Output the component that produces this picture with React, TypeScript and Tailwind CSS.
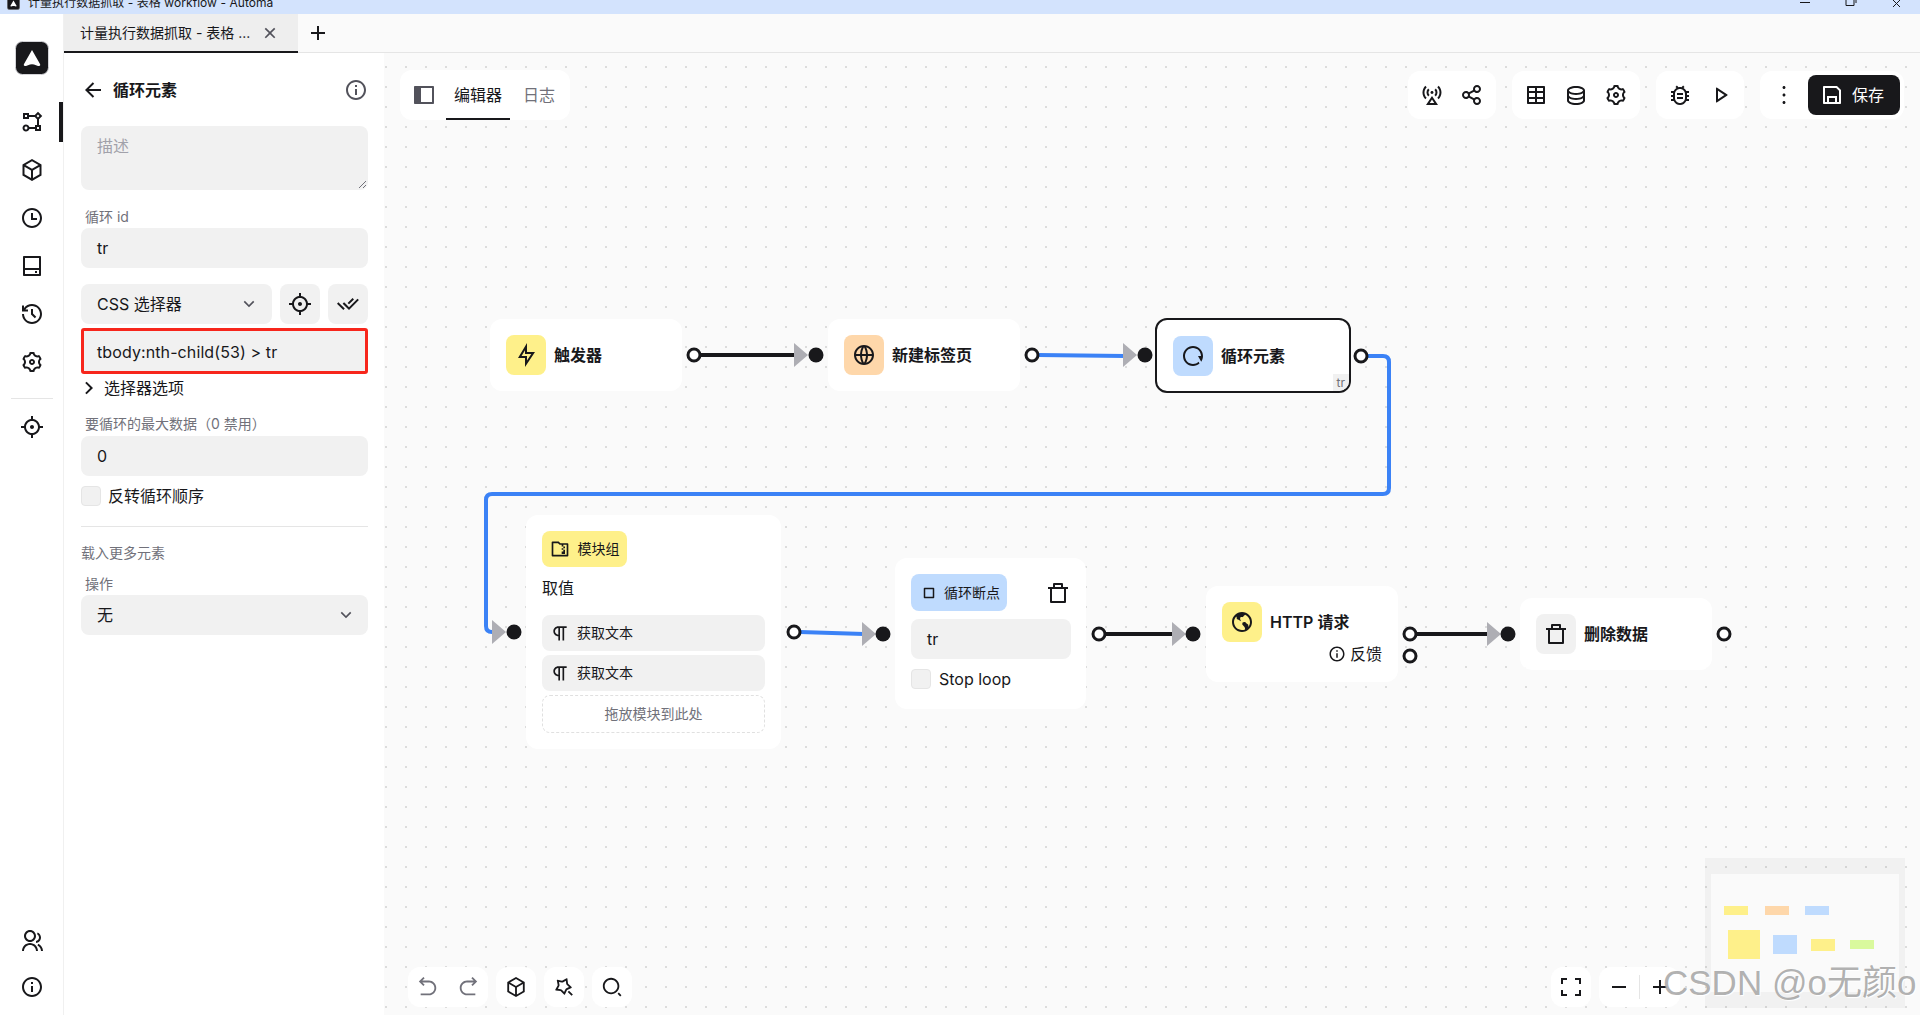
import type { ReactNode } from "react";
import {
  RiAddLine,
  RiArrowDownSLine,
  RiArrowGoBackLine,
  RiArrowGoForwardLine,
  RiArrowLeftLine,
  RiArrowRightSLine,
  RiBaseStationLine,
  RiBox3Line,
  RiBug2Line,
  RiCheckDoubleLine,
  RiCloseLine,
  RiDatabase2Line,
  RiEarthLine,
  RiFlashlightLine,
  RiFlowChart,
  RiFocus3Line,
  RiFolderZipLine,
  RiFullscreenLine,
  RiGlobalLine,
  RiGroupLine,
  RiHardDrive2Line,
  RiHistoryLine,
  RiInformationLine,
  RiMagicLine,
  RiMore2Line,
  RiParagraph,
  RiPlayLine,
  RiRestartLine,
  RiSaveLine,
  RiSearch2Line,
  RiSettings3Line,
  RiShareLine,
  RiSideBarFill,
  RiStopLine,
  RiSubtractLine,
  RiTable2,
  RiTimeLine,
} from "react-icons/ri";

const Logo = ({ size }: { size: number }) => (
  <svg width={size} height={size} viewBox="0 0 34 34">
    <rect x="0.5" y="0.5" width="33" height="33" rx="7" fill="#18181b" stroke="#d4d4d8" />
    <path d="M17 9 L25 23 Q26 25 23 25 L19 23.5 Q17 23 15 23.5 L11 25 Q8 25 9 23 Z" fill="#fff" />
  </svg>
);

const TrashIcon = () => (
  <svg width="24" height="24" viewBox="0 0 24 24" fill="currentColor">
    <path d="M17 6h5v2h-2v13a1 1 0 0 1-1 1H5a1 1 0 0 1-1-1V8H2V6h5V3a1 1 0 0 1 1-1h8a1 1 0 0 1 1 1v3zm1 2H6v12h12V8zM9 4v2h6V4H9z" />
  </svg>
);

const NavItem = ({ children }: { children: ReactNode }) => (
  <div className="flex h-10 w-full shrink-0 items-center justify-center text-[#18181b]">
    {children}
  </div>
);

const Nav = () => (
  <aside className="relative flex w-16 shrink-0 flex-col items-center border-r border-[#f0f0f0] bg-white">
    <div className="mt-[27px] mb-[27px]">
      <Logo size={34} />
    </div>
    <div className="flex w-full flex-col gap-2">
      <NavItem><RiFlowChart size={24} /></NavItem>
      <NavItem><RiBox3Line size={24} /></NavItem>
      <NavItem><RiTimeLine size={24} /></NavItem>
      <NavItem><RiHardDrive2Line size={24} /></NavItem>
      <NavItem><RiHistoryLine size={24} /></NavItem>
      <NavItem><RiSettings3Line size={24} /></NavItem>
    </div>
    <div className="mt-4 mb-2 h-px w-[42px] bg-[#e5e5e5]" />
    <NavItem><RiFocus3Line size={24} /></NavItem>
    <div className="mt-auto mb-2 flex w-full flex-col gap-1.5">
      <NavItem><RiGroupLine size={24} /></NavItem>
      <NavItem><RiInformationLine size={24} /></NavItem>
    </div>
    <div className="absolute top-[88px] right-0 h-10 w-1 bg-[#18181b]" />
  </aside>
);

const Label = ({ children }: { children: ReactNode }) => (
  <div className="h-5 pl-1 text-sm leading-5 text-[#71717a]">{children}</div>
);

const Field = ({ children, className = "" }: { children: ReactNode; className?: string }) => (
  <div className={`flex h-10 items-center rounded-lg bg-[#f1f1f1] px-4 text-base text-[#18181b] ${className}`}>
    {children}
  </div>
);

const Panel = () => (
  <section className="w-[320px] shrink-0 bg-white pt-[25px] pr-4 pl-[17px]">
    <div className="flex h-6 items-center text-[#18181b]">
      <RiArrowLeftLine size={24} />
      <span className="ml-2 text-base font-semibold">循环元素</span>
      <RiInformationLine size={24} className="ml-auto text-[#52525b]" />
    </div>

    <div className="relative mt-6 h-16 rounded-lg bg-[#f1f1f1] px-4 py-2 text-base leading-6 text-[#a1a1aa]">
      描述
      <svg width="9" height="9" viewBox="0 0 9 9" className="absolute right-[1px] bottom-[1px]">
        <path d="M1 8 L8 1 M5 8 L8 5" stroke="#71717a" strokeWidth="1" />
      </svg>
    </div>

    <div className="mt-[17px] mb-px"><Label>循环 id</Label></div>
    <Field>tr</Field>

    <div className="mt-4 flex gap-2">
      <Field className="w-[191px] justify-between">
        <span>CSS 选择器</span>
        <RiArrowDownSLine size={20} className="mr-[-3px] text-[#52525b]" />
      </Field>
      <div className="flex h-10 w-10 items-center justify-center rounded-lg bg-[#f1f1f1]"><RiFocus3Line size={24} /></div>
      <div className="flex h-10 w-10 items-center justify-center rounded-lg bg-[#f1f1f1]"><RiCheckDoubleLine size={24} /></div>
    </div>

    <div className="mt-1 flex h-[46px] items-center rounded-[3px] border-[3px] border-[#f7261c] bg-[#f1f1f1] px-[13px] pt-px text-base tracking-[0.1px] text-[#18181b]">
      tbody:nth-child(53) &gt; tr
    </div>

    <div className="mt-1 flex h-5 items-center text-base text-[#18181b]">
      <RiArrowRightSLine size={24} className="ml-[-4px]" />
      <span className="ml-[3px]">选择器选项</span>
    </div>

    <div className="mt-4 mb-[2px]"><Label>要循环的最大数据（0 禁用）</Label></div>
    <Field>0</Field>

    <div className="mt-2.5 flex h-5 items-center">
      <span className="h-5 w-5 rounded border border-[#e5e5e5] bg-[#f1f1f1]" />
      <span className="ml-[7px] text-base text-[#18181b]">反转循环顺序</span>
    </div>

    <div className="mt-5 h-px bg-[#e5e5e5]" />

    <div className="mt-4 h-5 text-sm leading-5 text-[#71717a]">载入更多元素</div>
    <div className="mt-[11px] mb-px"><Label>操作</Label></div>
    <Field className="justify-between">
      <span>无</span>
      <RiArrowDownSLine size={20} className="mr-[-4px] text-[#52525b]" />
    </Field>
  </section>
);

const Card = ({ className, children }: { className: string; children: ReactNode }) => (
  <div className={`flex items-center rounded-xl bg-white ${className}`}>{children}</div>
);

const ToolIcon = ({ children }: { children: ReactNode }) => (
  <div className="flex w-10 items-center justify-center text-[#18181b]">{children}</div>
);

const TopBar = () => (
  <>
    <Card className="absolute top-[17px] left-4 h-[50px] w-[170px] pl-3">
      <RiSideBarFill size={24} className="text-[#52525b]" />
      <div className="relative ml-2.5 flex h-full w-16 items-center justify-center text-base text-[#18181b]">
        编辑器
        <span className="absolute right-0 bottom-0 left-0 h-[2px] bg-[#18181b]" />
      </div>
      <span className="ml-[13px] text-base text-[#71717a]">日志</span>
    </Card>
    <div className="absolute top-[18px] right-4 flex h-12 gap-4">
      <Card className="px-1">
        <ToolIcon><RiBaseStationLine size={24} /></ToolIcon>
        <ToolIcon><RiShareLine size={24} /></ToolIcon>
      </Card>
      <Card className="px-1">
        <ToolIcon><RiTable2 size={24} /></ToolIcon>
        <ToolIcon><RiDatabase2Line size={24} /></ToolIcon>
        <ToolIcon><RiSettings3Line size={24} /></ToolIcon>
      </Card>
      <Card className="px-1">
        <ToolIcon><RiBug2Line size={24} /></ToolIcon>
        <ToolIcon><RiPlayLine size={24} /></ToolIcon>
      </Card>
      <Card className="w-[144px] pl-1">
        <ToolIcon><RiMore2Line size={24} /></ToolIcon>
        <button className="ml-1 flex h-10 w-[92px] items-center gap-2 rounded-lg bg-[#18181b] pl-3 text-base text-white">
          <RiSaveLine size={24} />
          保存
        </button>
      </Card>
    </div>
  </>
);

const BottomBar = () => (
  <>
    <div className="absolute bottom-2 left-6 flex h-10 gap-2">
      <Card className="w-20">
        <ToolIcon><RiArrowGoBackLine size={22} className="text-[#71717a]" /></ToolIcon>
        <ToolIcon><RiArrowGoForwardLine size={22} className="text-[#71717a]" /></ToolIcon>
      </Card>
      <Card className="w-10"><ToolIcon><RiBox3Line size={22} /></ToolIcon></Card>
      <Card className="w-10"><ToolIcon><RiMagicLine size={22} /></ToolIcon></Card>
      <Card className="w-10"><ToolIcon><RiSearch2Line size={22} /></ToolIcon></Card>
    </div>
    <div className="absolute bottom-2 left-[1167px] flex h-10 gap-2">
      <Card className="w-10"><ToolIcon><RiFullscreenLine size={24} /></ToolIcon></Card>
      <Card className="w-[81px]">
        <ToolIcon><RiSubtractLine size={24} /></ToolIcon>
        <span className="h-6 w-px bg-[#e5e5e5]" />
        <ToolIcon><RiAddLine size={24} /></ToolIcon>
      </Card>
    </div>
  </>
);

const Edges = () => (
  <svg
    className="absolute inset-0 h-full w-full"
    viewBox="384 53 1536 962"
    fill="none"
  >
    <path d="M700 355 H796" stroke="#18181b" strokeWidth="4" />
    <path d="M1038 355 L1125 356" stroke="#3b82f6" strokeWidth="4" />
    <path
      d="M1368 356 H1383 Q1389 356 1389 362 V488 Q1389 494 1383 494 H492 Q486 494 486 500 V626 Q486 632 492 632 H496"
      stroke="#3b82f6"
      strokeWidth="4"
    />
    <path d="M800 632 L864 634" stroke="#3b82f6" strokeWidth="4" />
    <path d="M1106 634 H1174" stroke="#18181b" strokeWidth="4" />
    <path d="M1417 634 H1489" stroke="#18181b" strokeWidth="4" />

    <path d="M794 343 L808 355 L794 367 Z" fill="#aeaeb4" />
    <path d="M1123 343 L1137 355 L1123 367 Z" fill="#aeaeb4" />
    <path d="M492 620 L506 632 L492 644 Z" fill="#aeaeb4" />
    <path d="M862 622 L876 634 L862 646 Z" fill="#aeaeb4" />
    <path d="M1172 622 L1186 634 L1172 646 Z" fill="#aeaeb4" />
    <path d="M1487 622 L1501 634 L1487 646 Z" fill="#aeaeb4" />

    <g fill="#18181b">
      <circle cx="816" cy="355" r="7.5" />
      <circle cx="1145" cy="355" r="7.5" />
      <circle cx="514" cy="632" r="7.5" />
      <circle cx="883" cy="634" r="7.5" />
      <circle cx="1193" cy="634" r="7.5" />
      <circle cx="1508" cy="634" r="7.5" />
    </g>
    <g fill="#fff" stroke="#18181b" strokeWidth="3">
      <circle cx="694" cy="355" r="6" />
      <circle cx="1032" cy="355" r="6" />
      <circle cx="1361" cy="356" r="6" />
      <circle cx="794" cy="632" r="6" />
      <circle cx="1099" cy="634" r="6" />
      <circle cx="1410" cy="634" r="6" />
      <circle cx="1410" cy="656" r="6" />
      <circle cx="1724" cy="634" r="6" />
    </g>
  </svg>
);

const IconBox = ({ className, children }: { className: string; children: ReactNode }) => (
  <span className={`flex h-10 w-10 shrink-0 items-center justify-center rounded-lg text-[#18181b] ${className}`}>
    {children}
  </span>
);

const Nodes = () => (
  <>
    <div className="absolute top-[266px] left-[106px] flex h-[72px] w-[192px] items-center gap-2 rounded-xl bg-white px-4">
      <IconBox className="bg-[#fef08a]"><RiFlashlightLine size={24} /></IconBox>
      <span className="text-base font-semibold">触发器</span>
    </div>

    <div className="absolute top-[266px] left-[444px] flex h-[72px] w-[192px] items-center gap-2 rounded-xl bg-white px-4">
      <IconBox className="bg-[#fed7aa]"><RiGlobalLine size={24} /></IconBox>
      <span className="text-base font-semibold">新建标签页</span>
    </div>

    <div className="absolute top-[265px] left-[771px] flex h-[75px] w-[196px] items-center gap-2 overflow-hidden rounded-xl border-2 border-[#18181b] bg-white px-4">
      <IconBox className="bg-[#bfdbfe]"><RiRestartLine size={24} /></IconBox>
      <span className="text-base font-semibold">循环元素</span>
      <span className="absolute right-0 bottom-0 bg-[#f1f1f1] px-1 text-xs leading-[17px] text-[#71717a]">tr</span>
    </div>

    <div className="absolute top-[462px] left-[142px] h-[234px] w-[255px] rounded-xl bg-white p-4">
      <div className="flex h-9 w-[85px] items-center justify-center gap-2 rounded-lg bg-[#fef08a] text-sm text-[#18181b]">
        <RiFolderZipLine size={20} />
        模块组
      </div>
      <div className="mt-[11px] text-base leading-5 text-[#18181b]">取值</div>
      <div className="mt-[17px] flex flex-col gap-1">
        {[0, 1].map((i) => (
          <div key={i} className="flex h-9 items-center gap-[7px] rounded-lg bg-[#f1f1f1] pl-2 text-sm text-[#18181b]">
            <RiParagraph size={20} />
            获取文本
          </div>
        ))}
        <div className="flex h-[38px] items-center justify-center rounded-lg border border-dashed border-[#e0e0e0] text-sm text-[#71717a]">
          拖放模块到此处
        </div>
      </div>
    </div>

    <div className="absolute top-[505px] left-[511px] h-[151px] w-[191px] rounded-xl bg-white p-4">
      <div className="flex items-center justify-between">
        <div className="flex h-[37px] w-[96px] items-center gap-1.5 rounded-lg bg-[#bfdbfe] pl-[9px] text-sm whitespace-nowrap text-[#18181b]">
          <RiStopLine size={18} />
          循环断点
        </div>
        <TrashIcon />
      </div>
      <Field className="mt-2 w-40">tr</Field>
      <div className="mt-2.5 flex h-5 items-center">
        <span className="h-5 w-5 rounded border border-[#e5e5e5] bg-[#f1f1f1]" />
        <span className="ml-2 text-base text-[#18181b]">Stop loop</span>
      </div>
    </div>

    <div className="absolute top-[533px] left-[822px] h-[96px] w-[192px] rounded-xl bg-white p-4">
      <div className="flex items-center gap-2">
        <IconBox className="bg-[#fef08a]"><RiEarthLine size={24} /></IconBox>
        <span className="text-base font-semibold">HTTP 请求</span>
      </div>
      <div className="flex items-center justify-end gap-1 text-base text-[#18181b]">
        <RiInformationLine size={18} />
        反馈
      </div>
    </div>

    <div className="absolute top-[545px] left-[1136px] flex h-[72px] w-[192px] items-center gap-2 rounded-xl bg-white px-4">
      <IconBox className="bg-[#f1f1f1]"><TrashIcon /></IconBox>
      <span className="text-base font-semibold">删除数据</span>
    </div>
  </>
);

const minimapRects = [
  { x: 19, y: 48, w: 24, h: 9, color: "#fef08a" },
  { x: 60, y: 48, w: 24, h: 9, color: "#fed7aa" },
  { x: 100, y: 48, w: 24, h: 9, color: "#bfdbfe" },
  { x: 23, y: 72, w: 32, h: 29, color: "#fef08a" },
  { x: 68, y: 77, w: 24, h: 19, color: "#bfdbfe" },
  { x: 106, y: 81, w: 24, h: 12, color: "#fef08a" },
  { x: 145, y: 82, w: 24, h: 9, color: "#d9f99d" },
];

const Minimap = () => (
  <svg
    width="200"
    height="150"
    viewBox="0 0 200 150"
    className="absolute top-[805px] left-[1321px]"
  >
    <rect width="200" height="150" fill="#000" fillOpacity="0.035" />
    <rect x="6" y="16" width="188" height="118" fill="#fafafa" />
    {minimapRects.map((r) => (
      <rect key={r.x} x={r.x} y={r.y} width={r.w} height={r.h} fill={r.color} />
    ))}
  </svg>
);

export default function App() {
  return (
    <div className="flex h-[1015px] w-[1920px] flex-col overflow-hidden bg-white font-['Inter','Noto_Sans_CJK_SC',sans-serif] text-[#18181b]">
      {/* window title, cut off at the top of the shot */}
      <div className="relative flex h-3.5 shrink-0 items-start overflow-hidden bg-[#d3e3fd]">
        <div className="mt-[-7px] ml-[7px] flex h-5 items-center gap-2 text-xs tracking-[0.05px] whitespace-nowrap">
          <Logo size={13} />
          计量执行数据抓取 - 表格 workflow - Automa
        </div>
        <svg width="110" height="14" viewBox="0 0 110 14" className="absolute top-0 right-2.5" fill="none" stroke="#18181b">
          <path d="M0 2.5 H10" />
          <path d="M46 0 V5.5 H54 V0 M56 0 V3" />
          <path d="M93 0 L100 7 M100 0 L93 7" />
        </svg>
      </div>

      <div className="flex min-h-0 flex-1">
        <Nav />
        <div className="flex min-w-0 flex-1 flex-col">
          <div className="flex h-[39px] shrink-0 border-b border-[#e5e5e5] bg-[#fafafa]">
            <div className="flex h-[39px] w-[234px] items-center border-b-2 border-[#18181b] bg-[#eeeeee] pr-5 pl-4 text-sm whitespace-nowrap">
              <span>计量执行数据抓取 - 表格 ...</span>
              <RiCloseLine size={20} className="mr-[-2px] ml-auto text-[#52525b]" />
            </div>
            <div className="ml-2 flex w-6 items-center justify-center">
              <RiAddLine size={24} />
            </div>
          </div>

          <div className="flex min-h-0 flex-1">
            <Panel />
            <main className="relative flex-1 overflow-hidden bg-[#fafafa] bg-[radial-gradient(circle_at_1px_1px,#dcdcdc_1px,transparent_1.2px)] bg-[size:20px_20px] bg-[position:1px_13px]">
              <Minimap />
              <Edges />
              <Nodes />
              <TopBar />
              <BottomBar />
              <span className="absolute top-[907px] left-[1279px] font-['Liberation_Sans','Noto_Sans_CJK_SC',sans-serif] text-[35px] leading-[46px] whitespace-nowrap text-[#8f8f8f]/70 [text-shadow:1px_1px_1px_#fff]">
                CSDN @o无颜o
              </span>
            </main>
          </div>
        </div>
      </div>
    </div>
  );
}
